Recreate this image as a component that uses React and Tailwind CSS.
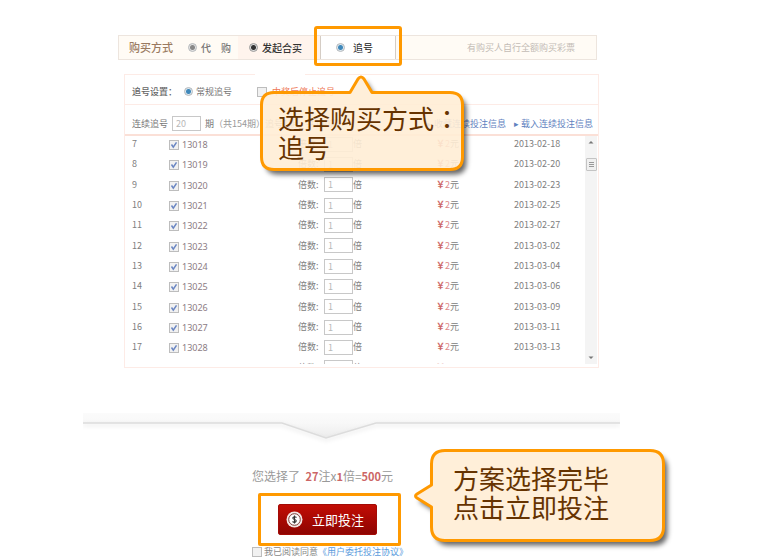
import React, { useState } from "react";

const draws = [
  ["7", "13018", "2013-02-18"],
  ["8", "13019", "2013-02-20"],
  ["9", "13020", "2013-02-23"],
  ["10", "13021", "2013-02-25"],
  ["11", "13022", "2013-02-27"],
  ["12", "13023", "2013-03-02"],
  ["13", "13024", "2013-03-04"],
  ["14", "13025", "2013-03-06"],
  ["15", "13026", "2013-03-09"],
  ["16", "13027", "2013-03-11"],
  ["17", "13028", "2013-03-13"],
  ["18", "13029", "2013-03-16"],
];

const radioStyle =
  "h-[9px] w-[9px] shrink-0 appearance-none rounded-full border border-[#b4b8bb] bg-[radial-gradient(circle,#888_0_2px,#e4e4e4_3px)] checked:bg-[radial-gradient(circle,#3f88ba_0_2px,#dce8f0_3px)]";
const darkRadioStyle =
  "h-[9px] w-[9px] shrink-0 appearance-none rounded-full border border-[#999] bg-[radial-gradient(circle,#333_0_2px,#ddd_3px)]";
const fieldStyle =
  "h-[15px] w-[29px] border border-[#c8c8c8] bg-white pl-[3px] text-[9px] leading-3 text-[#b8b8b8] outline-none";

function Tick({ label, checked }) {
  const [on, setOn] = useState(checked);
  return (
    <span className="relative inline-flex h-[10px] w-[10px] shrink-0">
      <input
        type="checkbox"
        aria-label={label}
        checked={on}
        onChange={() => setOn(!on)}
        className="h-[10px] w-[10px] appearance-none border border-[#bdbdbd] bg-[#f1f1f1]"
      />
      {on && (
        <svg viewBox="0 0 10 10" className="pointer-events-none absolute inset-0 h-[10px] w-[10px]" fill="none" stroke="#6a86c2" strokeWidth="1.5">
          <path d="M2.5 4.5 L4.3 7.2 L7.5 2.3" />
        </svg>
      )}
    </span>
  );
}

function PurchaseTabs() {
  return (
    <div className="flex h-[25px] items-stretch border border-[#ede5de] bg-[#fffbf5] text-[10px]">
      <h1 className="flex w-[68px] items-center pl-[10px] text-[11px] font-medium text-[#9a7a60]">购买方式</h1>
      <label className="flex w-[51px] items-center gap-1 pl-[1px] font-medium text-[#777]">
        <input type="radio" name="mode" className={radioStyle} />
        <span className="whitespace-pre">代　购</span>
      </label>
      <label className="flex w-[82px] items-center gap-1 bg-[#fff4ed] pl-[11px] font-medium text-[#333]">
        <input type="radio" name="mode" className={darkRadioStyle} />
        发起合买
      </label>
      <label className="relative flex w-[76px] items-center gap-2 border-x border-[#d5cdc5] bg-white pl-[15px] text-[#222]">
        <input type="radio" name="mode" defaultChecked className={radioStyle} />
        追号
        <span className="pointer-events-none absolute -inset-x-[7px] -top-[10px] -bottom-[7px] rounded-[3px] border-3 border-[#ff9900]" />
      </label>
      <p className="ml-auto flex items-center pr-[21px] text-[9px] text-[#c3bcb6]">有购买人自行全额购买彩票</p>
    </div>
  );
}

function ChaseTable() {
  return (
    <div className="flex h-[228px] overflow-hidden pr-px">
      <div className="min-w-0 flex-1 overflow-hidden">
        <table className="-mt-[2px] h-[244px] w-full table-fixed border-collapse text-[9px] leading-3 text-[#808080]">
          <colgroup>
            <col className="w-[44px]" />
            <col className="w-[129px]" />
            <col className="w-[138px]" />
            <col className="w-[78px]" />
            <col />
          </colgroup>
          <tbody>
            {draws.map(([n, issue, date]) => (
              <tr key={n}>
                <td className="p-0 pl-[7px] align-middle">{n}</td>
                <td className="p-0 align-middle">
                  <span className="flex items-center gap-[3px] pt-[2px] font-['Noto_Sans',sans-serif] text-[#8c7c84]">
                    <Tick label={issue} checked />
                    {issue}
                  </span>
                </td>
                <td className="p-0 align-middle">
                  <label className="flex items-center">
                    <span className="w-[26px] whitespace-nowrap">倍数:</span>
                    <input defaultValue="1" className={fieldStyle} />
                    <span>倍</span>
                  </label>
                </td>
                <td className="p-0 align-middle">
                  <b className="font-bold text-[#cc6666]">￥</b>
                  <span className="text-[#dd8888]">2</span>元
                </td>
                <td className="p-0 align-middle">{date}</td>
              </tr>
            ))}
          </tbody>
        </table>
      </div>
      <div className="flex w-[12px] flex-col items-center bg-[#f4f4f4]">
        <svg viewBox="0 0 12 12" className="h-3 w-3" fill="#777"><path d="M3.500 7.500 L6 5 L8.500 7.500Z" /></svg>
        <div className="mt-[10px] flex h-[13px] w-[11px] flex-col items-center justify-center gap-px rounded-[1px] border border-[#c4c4c4] bg-[#f0f0f0]">
          <i className="h-px w-[5px] bg-[#999]" />
          <i className="h-px w-[5px] bg-[#999]" />
          <i className="h-px w-[5px] bg-[#999]" />
        </div>
        <svg viewBox="0 0 12 12" className="mt-auto h-3 w-3" fill="#777"><path d="M3.500 4.500 L6 7 L8.500 4.500Z" /></svg>
      </div>
    </div>
  );
}

function ChasePanel() {
  return (
    <div className="relative border border-[#fdebe6] pb-[3px] text-[9px] text-[#777]">
      <span className="absolute -top-px left-[130px] h-px w-[50px] bg-white" />
      <div className="flex h-[30px] items-center border-b border-[#fdebe6] pt-[4px] pl-[7px]">
        <span className="w-[52px] font-medium text-[#666]">追号设置：</span>
        <label className="flex w-[73px] items-center gap-[3px]">
          <input type="radio" name="rule" defaultChecked className={radioStyle} />
          常规追号
        </label>
        <span className="flex items-center gap-[5px] text-[#ee7755]">
          <Tick label="中奖后停止追号" checked={false} />
          中奖后停止追号
        </span>
      </div>
      <div className="flex h-[31px] items-center border-b-2 border-[#fbe0d7] pt-[8px] pr-[5px] pl-[7px] whitespace-nowrap">
        <label className="flex items-center gap-1">
          连续追号
          <input defaultValue="20" className={fieldStyle} />
        </label>
        <span className="ml-1">期</span>
        <span className="text-[#999]">（共154期）</span>
        <span>追号1期，共140期</span>
        <a href="#save" className="ml-auto text-[#5f82c0]">▸ 收藏连续投注信息</a>
        <a href="#load" className="ml-2 text-[#5f82c0]">▸ 载入连续投注信息</a>
      </div>
      <ChaseTable />
    </div>
  );
}

function Callout({ id, className, viewBox, path, children }) {
  return (
    <div className={className}>
      <svg viewBox={viewBox} className="absolute inset-0 h-full w-full overflow-visible">
        <defs>
          <mask id={id + "-outside"} maskUnits="userSpaceOnUse" x="-20" y="-20" width="320" height="160">
            <rect x="-20" y="-20" width="320" height="160" fill="#fff" />
            <path d={path} fill="#000" />
          </mask>
          <filter id={id + "-blur"} x="-10%" y="-20%" width="120%" height="140%">
            <feGaussianBlur stdDeviation="2.5" />
          </filter>
        </defs>
        <g mask={`url(#${id}-outside)`}>
          <path d={path} transform="translate(4 5)" fill="#000" fillOpacity="0.6" filter={`url(#${id}-blur)`} />
        </g>
        <path d={path} fill="#ffedd5" fillOpacity="0.9" stroke="#ff9900" strokeWidth="3" strokeLinejoin="round" />
      </svg>
      <p className="relative text-[26px] leading-[29px] whitespace-nowrap text-[#663300]">{children}</p>
    </div>
  );
}

export default function App() {
  return (
    <main className="relative min-h-screen overflow-hidden bg-white pt-[35px] pr-[162px] pl-[83px] font-['Noto_Sans_CJK_SC',sans-serif]">
      <section className="relative">
        <div className="pr-[23px] pl-[35px]">
          <PurchaseTabs />
        </div>
        <div className="mt-[14px] pr-[21px] pl-[41px]">
          <ChasePanel />
        </div>
        <Callout
          id="mode-hint"
          className="absolute top-[40px] left-[177px] h-[96px] w-[204px] pt-[28px] pl-[18px]"
          viewBox="0 0 204 96"
          path="M14 17.500 H90 L98 4 Q101 0 104 4 L112 17.500 H190 Q202.500 17.500 202.500 30 V82 Q202.500 94.500 190 94.500 H14 Q1.500 94.500 1.500 82 V30 Q1.500 17.500 14 17.500Z"
        >
          选择购买方式<span className="font-['Noto_Sans_CJK_TC',sans-serif]" lang="zh-TW">：</span>
          <br />
          追号
        </Callout>
      </section>

      <svg viewBox="0 0 537 36" preserveAspectRatio="none" className="mt-[44px] block h-[36px] w-full" aria-hidden="true">
        <defs>
          <linearGradient id="band" x1="0" y1="0" x2="0" y2="1">
            <stop offset="0" stopColor="#fbfbfb" />
            <stop offset="0.4" stopColor="#f8f8f8" />
            <stop offset="1" stopColor="#ececec" />
          </linearGradient>
        </defs>
        <path d="M0 1 H537 V11 H293 L243 26 L199 11 H0Z" fill="url(#band)" />
        <path
          className="drop-shadow-[0_2px_2px_rgba(0,0,0,0.12)]"
          d="M0 11 H199 L243 26 L293 11 H537"
          fill="none"
          stroke="#dcdcdc"
          strokeWidth="1.500"
        />
      </svg>

      <section className="relative pl-[169px]">
        <p className="pt-[20px] text-[12px] leading-4 whitespace-pre text-[#999]">
          您选择了{"  "}
          <b className="text-[11px] text-[#cc6666]">27</b>注x<b className="text-[11px] text-[#cc6666]">1</b>倍=<b className="text-[11px] text-[#cc6666]">500</b>元
        </p>
        <div className="mt-[9px] ml-[6px] flex h-[53px] w-[143px] items-center rounded-[2px] border-3 border-[#ff9900] pl-[17px]">
          <button className="flex h-[31px] w-[99px] items-center gap-[9px] rounded-[2px] border border-[#a30b06] bg-linear-to-b from-[#c20d05] to-[#8e0502] pl-[7px] text-[13px] text-white">
            <svg viewBox="0 0 17 17" className="h-[17px] w-[17px]" fill="none">
              <circle cx="8.500" cy="8.500" r="8" fill="#f3e6e4" />
              <circle cx="8.500" cy="8.500" r="5.800" fill="#fff" stroke="#7c3a36" strokeWidth="1" />
              <path d="M10.500 6.500 Q8.500 5 7 6.500 Q6.500 8 8.500 8.500 Q10.800 9 10 10.500 Q8.500 12 6.500 10.500 M8.500 4.500 V12.500" stroke="#333" strokeWidth="1.100" />
            </svg>
            立即投注
          </button>
        </div>
        <div className="flex items-center gap-[2px] text-[9px] leading-3 whitespace-nowrap text-[#888]">
          <Tick label="我已阅读同意" checked={false} />
          <span>
            我已阅读同意<a href="#terms" className="text-[#5b9bdc]">《用户委托投注协议》</a>
          </span>
        </div>
        <Callout
          id="submit-hint"
          className="absolute top-[1px] left-[331px] h-[93px] w-[251px] pt-[14px] pl-[39px]"
          viewBox="0 0 251 93"
          path="M31 1.500 H236 Q249.500 1.500 249.500 15 V78 Q249.500 91.500 236 91.500 H31 Q17.500 91.500 17.500 78 V58 L3 49 Q0 47 3 45 L17.500 36 V15 Q17.500 1.500 31 1.500Z"
        >
          方案选择完毕
          <br />
          点击立即投注
        </Callout>
      </section>
    </main>
  );
}
